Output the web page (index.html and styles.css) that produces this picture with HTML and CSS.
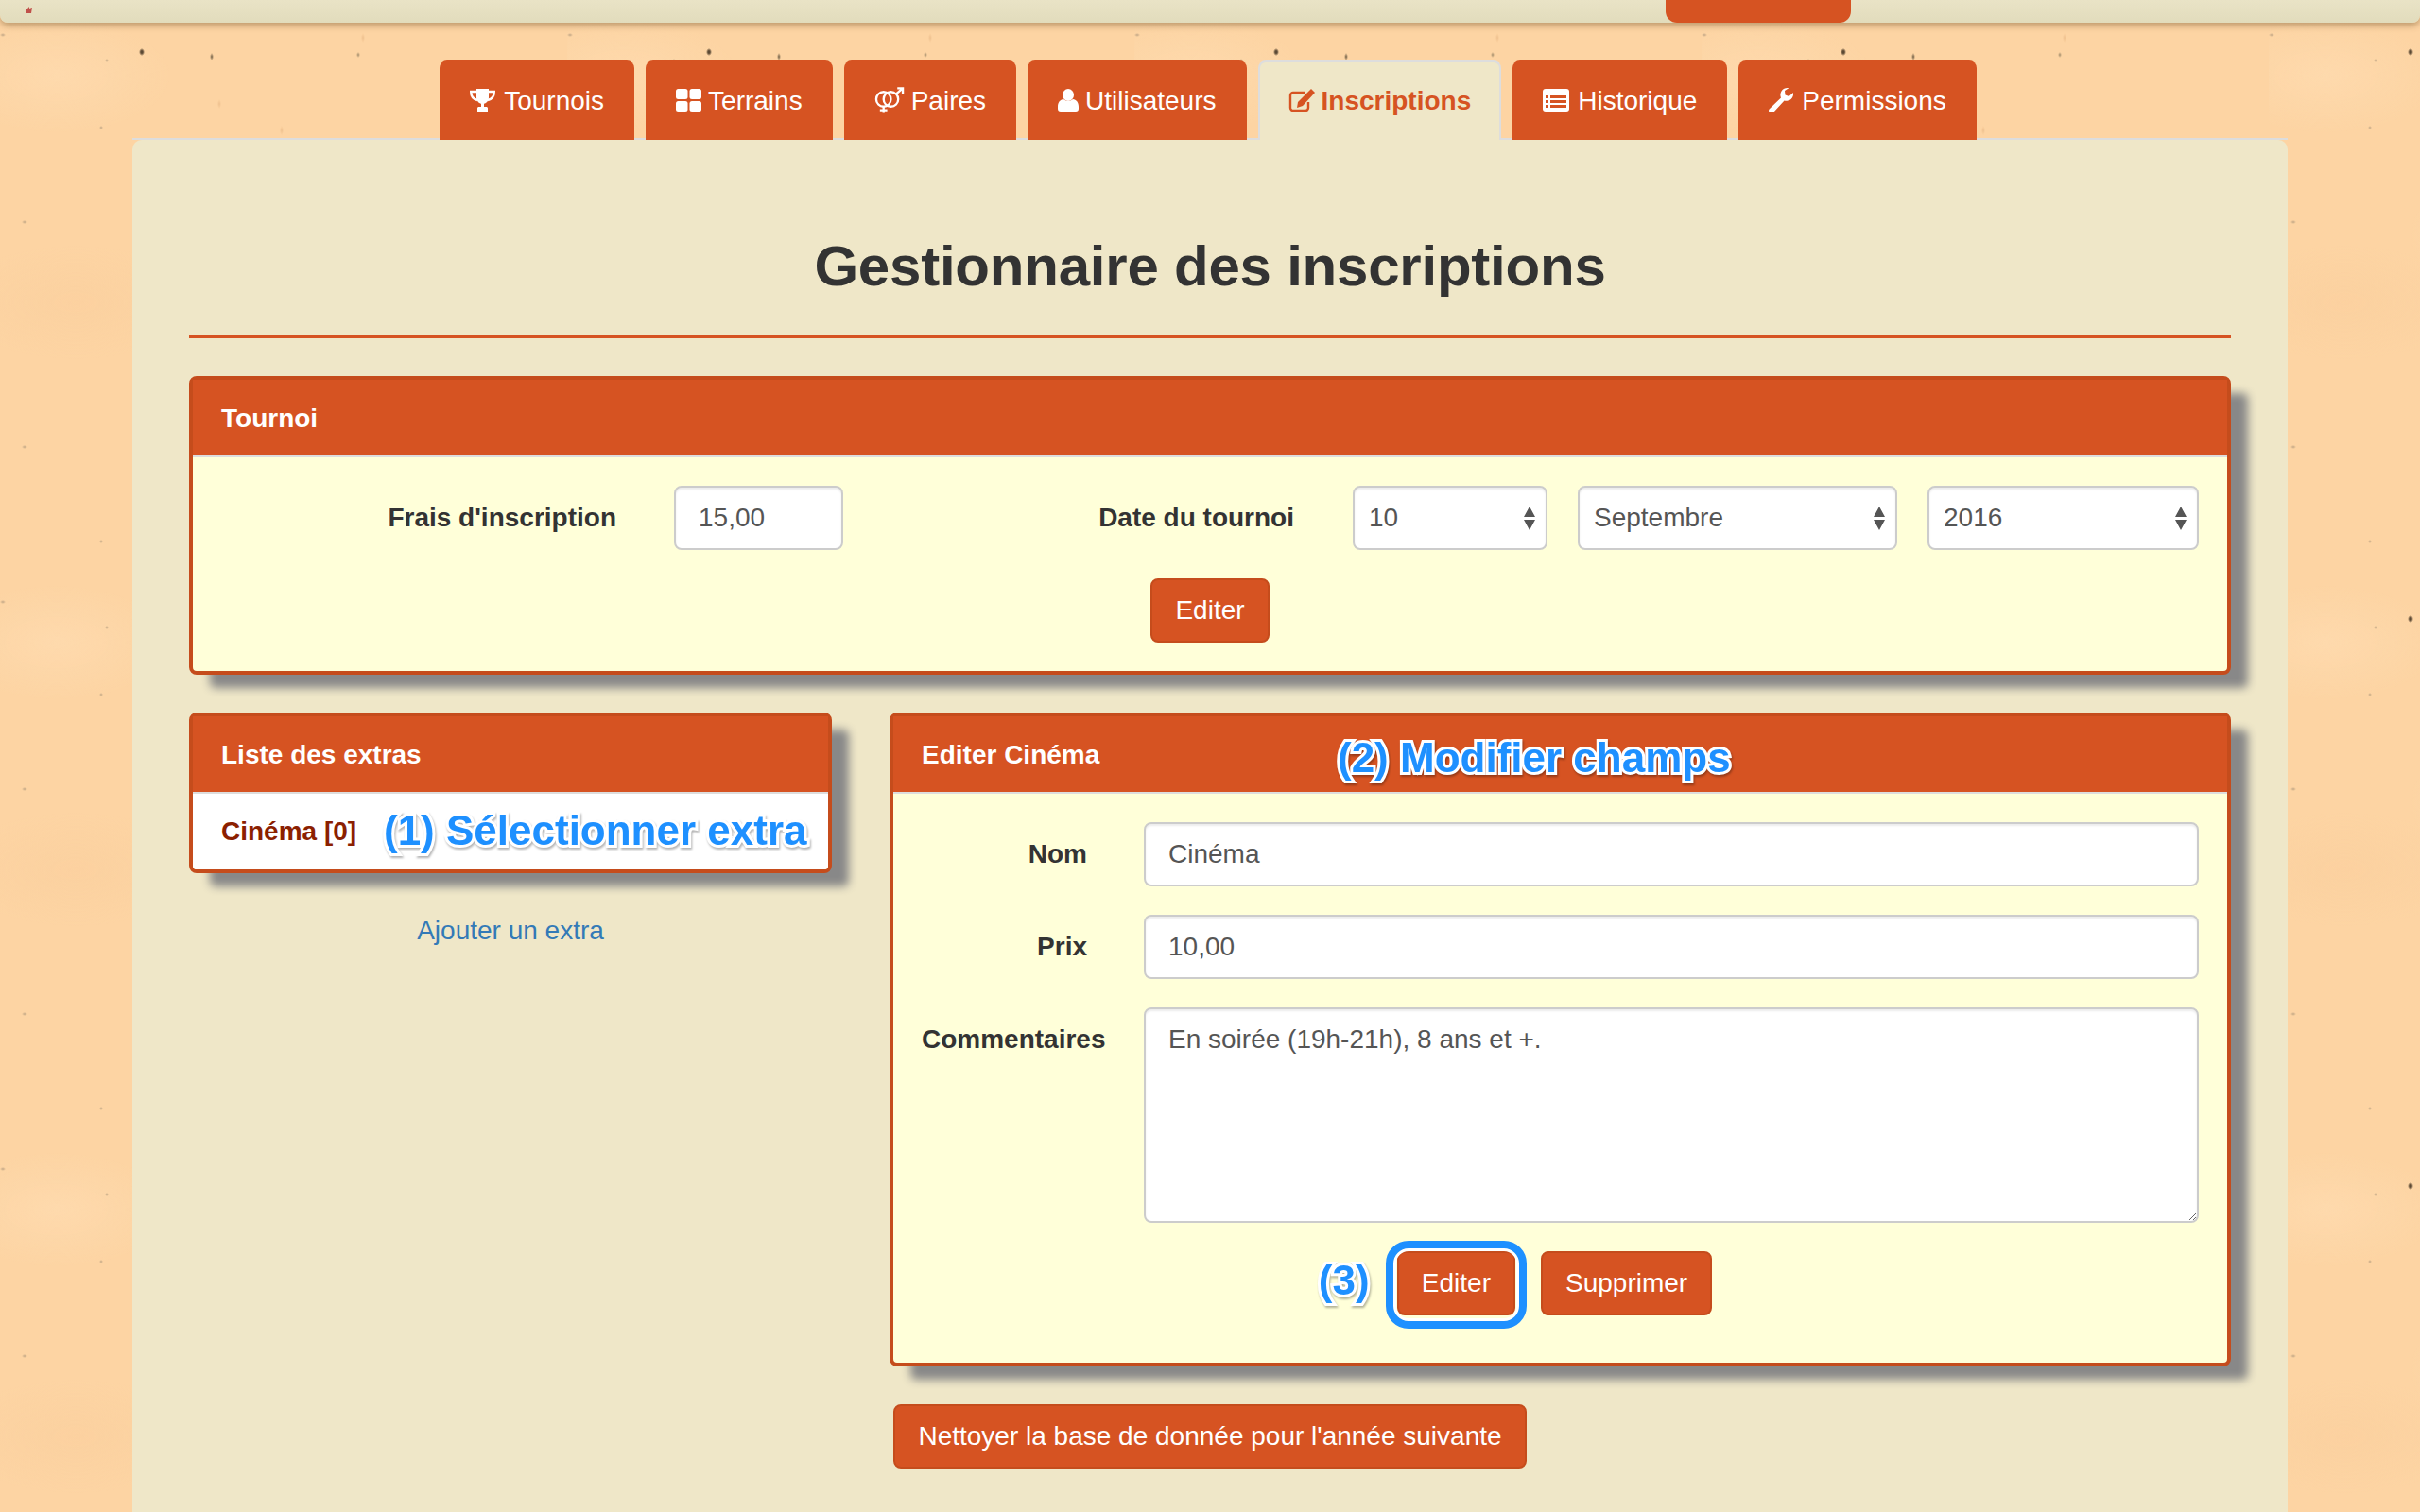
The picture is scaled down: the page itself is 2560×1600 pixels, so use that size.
FILE: index.html
```html
<!DOCTYPE html>
<html lang="fr">
<head>
    <meta charset="UTF-8">
    <meta name="viewport" content="width=device-width, initial-scale=1.0">
    <title>Gestionnaire des inscriptions</title>
    <link rel="stylesheet" href="styles.css">
</head>
<body>
    <!-- Barre du haut, coupée par la capture -->
    <div class="topbar">
        <svg class="broken-img" viewBox="0 0 8 8"><path d="M1 8V4l3-3v2l3-1-1 6z"/></svg>
        <div class="topbar-tab"></div>
    </div>

    <div class="container">
        <nav class="tabs">
            <a class="tab" href="#">
                <svg class="icon ic-trophy" viewBox="0 0 27 24"><path d="M7 0h13v9c0 4-3 7-6.500 7S7 13 7 9z"/><path class="line" d="M7 3H1.200c0 5 2.300 8 6.800 9M20 3h5.800c0 5-2.300 8-6.800 9"/><path d="M12 15h3v5h-3zM8 20.500c0-.8.700-1.500 1.500-1.500h8c.8 0 1.500.7 1.500 1.500V24H8z"/></svg>
                Tournois
            </a>
            <a class="tab" href="#">
                <svg class="icon ic-grid" viewBox="0 0 27 24"><rect width="12.500" height="11" rx="2.500"/><rect x="14.500" width="12.500" height="11" rx="2.500"/><rect y="13" width="12.500" height="11" rx="2.500"/><rect x="14.500" y="13" width="12.500" height="11" rx="2.500"/></svg>
                Terrains
            </a>
            <a class="tab" href="#">
                <svg class="icon ic-pairs" viewBox="0 0 33 28"><g class="line"><circle cx="10" cy="13" r="8"/><circle cx="18" cy="13" r="8"/><path d="M23.500 7.500 31 1M25 1h6v6M10 21v7M6 25h8"/></g></svg>
                Paires
            </a>
            <a class="tab" href="#">
                <svg class="icon ic-user" viewBox="0 0 22 24"><ellipse cx="11" cy="6.500" rx="6" ry="6.500"/><path d="M0 19c0-5 2.500-7.500 6-8 3 2.500 7 2.500 10 0 3.500.5 6 3 6 8v2c0 2-1 3-3 3H3c-2 0-3-1-3-3z"/></svg>
                Utilisateurs
            </a>
            <a class="tab tab-active" href="#">
                <svg class="icon ic-edit" viewBox="0 0 28 24"><path class="line" d="M21 14v6a3 3 0 0 1-3 3H5a3 3 0 0 1-3-3V7a3 3 0 0 1 3-3h13"/><path d="M24 0l4 4-13 14-6 2 1-6z"/></svg>
                Inscriptions
            </a>
            <a class="tab" href="#">
                <svg class="icon ic-list" viewBox="0 0 28 24"><rect width="28" height="24" rx="3"/><path class="cut" d="M3 7h3v3H3zM8 7h17v3H8zM3 12h3v3H3zM8 12h17v3H8zM3 17h3v3H3zM8 17h17v3H8z"/></svg>
                Historique
            </a>
            <a class="tab" href="#">
                <svg class="icon ic-wrench" viewBox="0 0 26 26"><path d="M20 0a7.500 7.500 0 0 0-7 10.500L1 22a2.500 2.500 0 0 0 4 4l11.500-12.500A7.500 7.500 0 0 0 26 5l-4.500 4-4-1.500L17 3l4.500-3z"/></svg>
                Permissions
            </a>
        </nav>

        <main class="content">
            <h1 class="page-title">Gestionnaire des inscriptions</h1>
            <hr class="title-rule">

            <!-- Tournoi -->
            <section class="panel">
                <div class="panel-heading">Tournoi</div>
                <form class="panel-body">
                    <div class="form-row">
                        <label class="form-label lbl-frais">Frais d'inscription</label>
                        <input class="form-control input-frais" value="15,00">
                        <label class="form-label lbl-date">Date du tournoi</label>
                        <select class="form-control sel sel-day"><option>10</option></select>
                        <select class="form-control sel sel-month"><option>Septembre</option></select>
                        <select class="form-control sel sel-year"><option>2016</option></select>
                    </div>
                    <div class="actions-center">
                        <button type="button" class="btn">Editer</button>
                    </div>
                </form>
            </section>

            <div class="columns">
                <!-- Liste des extras -->
                <div class="col-left">
                    <section class="panel">
                        <div class="panel-heading">Liste des extras</div>
                        <div class="extra-list">
                            <a class="extra-item" href="#">Cinéma [0]</a>
                            <span class="note note-1">(1) Sélectionner extra</span>
                        </div>
                    </section>
                    <a class="add-link" href="#">Ajouter un extra</a>
                </div>

                <!-- Formulaire de l'extra -->
                <section class="panel col-right">
                    <div class="panel-heading">
                        Editer Cinéma
                        <span class="note note-2">(2) Modifier champs</span>
                    </div>
                    <form class="panel-body">
                        <div class="field">
                            <label class="field-label">Nom</label>
                            <input class="form-control field-input" value="Cinéma">
                        </div>
                        <div class="field">
                            <label class="field-label">Prix</label>
                            <input class="form-control field-input" value="10,00">
                        </div>
                        <div class="field">
                            <label class="field-label">Commentaires</label>
                            <textarea class="form-control field-input field-area">En soirée (19h-21h), 8 ans et +.</textarea>
                        </div>
                        <div class="field-actions">
                            <span class="btn-wrap">
                                <span class="note note-3">(3)</span>
                                <button type="button" class="btn">Editer</button>
                                <span class="ring"></span>
                            </span>
                            <button type="button" class="btn">Supprimer</button>
                        </div>
                    </form>
                </section>
            </div>

            <div class="actions-center clean-row">
                <button type="button" class="btn">Nettoyer la base de donnée pour l'année suivante</button>
            </div>
        </main>
    </div>
</body>
</html>
```

FILE: styles.css
```css
* {
    box-sizing: border-box;
}
html, body {
    height: 100%;
}
body {
    margin: 0;
    font-family: "Liberation Sans", Arial, sans-serif;
    font-size: 28px;
    line-height: 40px;
    color: #333;
    background-color: #fdd4a3;
    background-size: 600px 600px;
    /* papier : petites taches puis marbrure */
    background-image:
        radial-gradient(ellipse 3px 4px at 150px 55px, #4a3a28 0, rgba(74,58,40,.8) 45%, transparent 100%),
        radial-gradient(ellipse 2px 4px at 224px 60px, #6a5a42 0, transparent 100%),
        radial-gradient(ellipse 2px 3px at 379px 58px, #a08a6a 0, transparent 100%),
        radial-gradient(ellipse 3px 2px at 3px 37px, #c0a584 0, transparent 100%),
        radial-gradient(circle 2px at 113px 64px, #c0a584 0, transparent 100%),
        radial-gradient(circle 2px at 107px 135px, #c0a584 0, transparent 100%),
        radial-gradient(ellipse 3px 2px at 26px 235px, #c0a584 0, transparent 100%),
        radial-gradient(ellipse 3px 2px at 26px 473px, #c0a584 0, transparent 100%),
        radial-gradient(circle 2px at 107px 573px, #c0a584 0, transparent 100%),
        radial-gradient(ellipse 2px 5px at 384px 40px, #eec08e 0, transparent 100%),
        radial-gradient(ellipse 2px 5px at 232px 110px, #eec08e 0, transparent 100%),
        radial-gradient(ellipse 2px 5px at 298px 138px, #eec08e 0, transparent 100%),
        radial-gradient(ellipse 120px 60px at 60px 80px, rgba(255,224,184,.45) 0, transparent 100%),
        radial-gradient(ellipse 100px 70px at 250px 250px, rgba(255,222,178,.45) 0, transparent 100%),
        radial-gradient(ellipse 130px 60px at 80px 320px, rgba(248,202,152,.3) 0, transparent 100%),
        radial-gradient(ellipse 120px 50px at 400px 420px, rgba(248,202,152,.3) 0, transparent 100%);
}

/* Barre du haut */
.topbar {
    display: flex;
    height: 24px;
    background: linear-gradient(#e9e3c6, #e2dcbc);
    border-radius: 0 0 8px 8px;
    box-shadow: 0 3px 7px rgba(110, 80, 40, .45);
}
.broken-img {
    width: 8px;
    height: 8px;
    margin: 6px 0 0 27px;
    fill: #c0504a;
}
.topbar-tab {
    width: 196px;
    margin-left: auto;
    margin-right: 602px;
    background: #d65322;
    border-radius: 0 0 12px 12px;
}

.container {
    width: 2280px;
    margin: 40px auto 0;
}

/* Onglets */
.tabs {
    display: flex;
    justify-content: center;
    gap: 12px;
    padding-right: 4px;
    height: 84px;
    border-bottom: 2px solid #ddd;
}
.tab {
    display: flex;
    align-items: center;
    gap: 7px;
    height: 84px;
    padding: 1px 32px 0;
    background: #d65322;
    color: #fff;
    text-decoration: none;
    border-radius: 8px 8px 0 0;
}
.tab-active {
    padding: 0 30px;
    background: #efe7c8;
    color: #d65322;
    font-weight: bold;
    border: 2px solid #ddd;
    border-bottom: 0;
}
.icon {
    flex: none;
    margin-top: -2px;
    fill: currentColor;
}
.icon .line {
    fill: none;
    stroke: currentColor;
    stroke-width: 2.400;
}
.icon .cut {
    fill: #d65322;
}
.ic-trophy { width: 27px; height: 24px; margin-right: 2px; }
.ic-grid { width: 27px; height: 24px; }
.ic-pairs { width: 32px; height: 28px; }
.ic-user { width: 22px; height: 24px; }
.ic-edit { width: 28px; height: 24px; }
.ic-list { width: 28px; height: 24px; margin-right: 2px; }
.ic-wrench { width: 26px; height: 26px; margin-right: 2px; }

/* Contenu */
.content {
    min-height: calc(100vh - 148px);
    padding: 0 60px 46px;
    background: #efe7c8;
    border-radius: 10px 10px 0 0;
}
.page-title {
    margin: 0;
    padding-top: 96px;
    font-size: 60px;
    line-height: 76px;
    letter-spacing: -.22px;
    text-align: center;
}
.title-rule {
    height: 4px;
    margin: 34px 0 40px;
    border: 0;
    background: #d65322;
}

/* Panneaux */
.panel {
    border: 4px solid #c54c1c;
    border-radius: 8px;
    background: #ffffd9;
    box-shadow: 20px 16px 10px -2px #888;
}
.panel-heading {
    position: relative;
    height: 82px;
    padding: 0 30px;
    line-height: 81px;
    font-weight: bold;
    color: #fff;
    background: #d65322;
    border-bottom: 2px solid #ddd;
}
.panel-body {
    margin: 0;
    padding: 30px;
}
.form-row {
    display: flex;
}
.form-label {
    font-weight: bold;
    line-height: 68px;
    text-align: right;
    white-space: nowrap;
}
.lbl-frais {
    width: 418px;
    margin-right: 61px;
}
.input-frais {
    width: 179px;
}
.lbl-date {
    width: 477px;
    margin-right: 62px;
}
.sel-day {
    width: 206px;
    margin-right: 32px;
}
.sel-month {
    width: 338px;
    margin-right: 32px;
}
.sel-year {
    width: 287px;
}

/* Champs */
.form-control {
    display: block;
    height: 68px;
    padding: 12px 24px;
    font-family: inherit;
    font-size: 28px;
    line-height: 40px;
    color: #555;
    background-color: #fff;
    border: 2px solid #ccc;
    border-radius: 8px;
    box-shadow: inset 0 2px 2px rgba(0, 0, 0, .075);
    outline: none;
}
.sel {
    appearance: none;
    padding: 12px 15px;
    background-image: url("data:image/svg+xml;utf8,<svg xmlns='http://www.w3.org/2000/svg' width='14' height='25'><path fill='%23555' d='M7 0l6 11H1zM7 25l-6-11h12z'/></svg>");
    background-repeat: no-repeat;
    background-position: right 10px center;
}
.actions-center {
    display: flex;
    justify-content: center;
    margin-top: 30px;
}
.btn {
    display: block;
    height: 68px;
    padding: 12px 24px;
    font-family: inherit;
    font-size: 28px;
    line-height: 40px;
    white-space: nowrap;
    color: #fff;
    background: #d65322;
    border: 2px solid #c54c1c;
    border-radius: 8px;
    cursor: pointer;
}

/* Colonnes */
.columns {
    display: flex;
    gap: 61px;
    margin-top: 40px;
}
.col-left {
    flex: none;
    width: 680px;
}
.col-right {
    flex: 1;
}
.extra-list {
    position: relative;
    height: 80px;
    padding: 20px 30px;
    background: #fff;
    border-radius: 0 0 4px 4px;
}
.extra-item {
    font-weight: bold;
    color: #8b2000;
    text-decoration: none;
}
.add-link {
    display: block;
    margin-top: 41px;
    text-align: center;
    color: #337ab7;
    text-decoration: none;
}
.field {
    display: flex;
    margin-bottom: 30px;
}
.field-label {
    flex: none;
    width: 175px;
    margin-right: 60px;
    font-weight: bold;
    line-height: 68px;
    text-align: right;
    white-space: nowrap;
}
.field-input {
    flex: 1;
    min-width: 0;
}
.field-area {
    height: 228px;
}
.field-actions {
    display: flex;
    justify-content: center;
    gap: 27px;
    padding-right: 12px;
    padding-bottom: 20px;
}
.btn-wrap {
    position: relative;
}
.ring {
    position: absolute;
    top: -11px;
    right: -12px;
    bottom: -14px;
    left: -12px;
    border: 8px solid #1e90ff;
    border-radius: 24px;
    box-shadow: inset 0 0 0 3px #fff;
}
.clean-row {
    margin-top: 40px;
}

/* Annotations par-dessus la capture */
.note {
    position: absolute;
    font-size: 44px;
    line-height: 50px;
    font-weight: bold;
    white-space: nowrap;
    color: #1e90ff;
    -webkit-text-stroke: 6px #fff;
    paint-order: stroke fill;
    filter: drop-shadow(1px 2px 1px rgba(0, 0, 0, .3));
}
.note-1 {
    top: 14px;
    left: 202px;
}
.note-2 {
    top: 19px;
    left: 470px;
}
.note-3 {
    top: 6px;
    left: -83px;
}
```
